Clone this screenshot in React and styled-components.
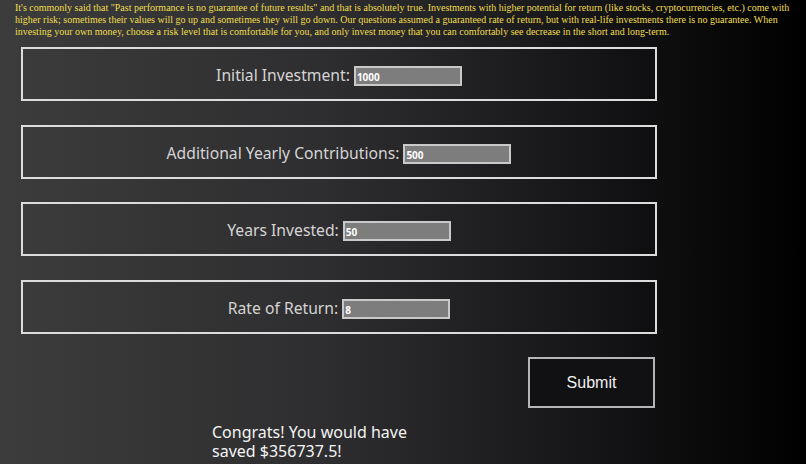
import styled, { createGlobalStyle } from "styled-components";

const GlobalStyle = createGlobalStyle`
  html, body {
    margin: 0;
    padding: 0;
    height: 100%;
  }
  body {
    background: linear-gradient(to right, #3c3c3c 0%, #2e2d2f 40%, #141315 75%, #000000 100%);
    overflow: hidden;
  }
`;

const Page = styled.div`
  width: 806px;
  height: 464px;
  padding: 2px 15px 0 15px;
  box-sizing: border-box;
`;

const Intro = styled.p`
  margin: 0;
  font-family: "Liberation Serif", "Times New Roman", serif;
  font-size: 10px;
  line-height: 12px;
  color: #f0de4e;
`;

const Form = styled.form`
  width: 636px;
  margin: 9px 0 0 6px;
  display: flex;
  flex-direction: column;
`;

const Field = styled.div`
  height: 54px;
  box-sizing: border-box;
  border: 2px solid #dcdcdc;
  display: flex;
  align-items: center;
  justify-content: center;
  margin-bottom: 23.5px;
  padding-top: 2px;
`;

const Label = styled.label`
  font-family: "Noto Sans", "Open Sans", sans-serif;
  font-size: 15.7px;
  color: #d4d4d4;
  margin-right: 4px;
`;

const Input = styled.input`
  width: 108px;
  height: 20px;
  box-sizing: border-box;
  background: #7d7d7e;
  border: 2px solid #c9c9c9;
  color: #fff;
  font-family: "Noto Sans", sans-serif;
  font-weight: bold;
  font-size: 10px;
  padding: 2px 1px 0;
  margin-top: 2px;
  outline: none;
`;

const Actions = styled.div`
  display: flex;
  justify-content: flex-end;
  padding-right: 2px;
`;

const Submit = styled.button`
  width: 127px;
  height: 51px;
  background: #111012;
  border: 2px solid #b5b5b5;
  color: #f0f0f0;
  font-family: "Liberation Sans", Arial, sans-serif;
  font-size: 16px;
  padding: 0;
`;

const Result = styled.p`
  margin: 15px 0 0 191px;
  width: 210px;
  font-family: "Noto Sans", "Open Sans", sans-serif;
  font-size: 16px;
  line-height: 19px;
  color: #f4f4f4;
`;

const fields = [
  { label: "Initial Investment:", value: "1000" },
  { label: "Additional Yearly Contributions:", value: "500" },
  { label: "Years Invested:", value: "50" },
  { label: "Rate of Return:", value: "8" },
];

function App() {
  return (
    <Page>
      <GlobalStyle />
      <Intro>
        It's commonly said that "Past performance is no guarantee of future results" and that is
        absolutely true. Investments with higher potential for return (like stocks,
        cryptocurrencies, etc.) come with higher risk; sometimes their values will go up and
        sometimes they will go down. Our questions assumed a guaranteed rate of return, but with
        real-life investments there is no guarantee. When investing your own money, choose a risk
        level that is comfortable for you, and only invest money that you can comfortably see
        decrease in the short and long-term.
      </Intro>
      <Form onSubmit={(e) => e.preventDefault()}>
        {fields.map((f) => (
          <Field key={f.label}>
            <Label>{f.label}</Label>
            <Input defaultValue={f.value} />
          </Field>
        ))}
        <Actions>
          <Submit type="submit">Submit</Submit>
        </Actions>
        <Result>Congrats! You would have saved $356737.5!</Result>
      </Form>
    </Page>
  );
}

export default App;
